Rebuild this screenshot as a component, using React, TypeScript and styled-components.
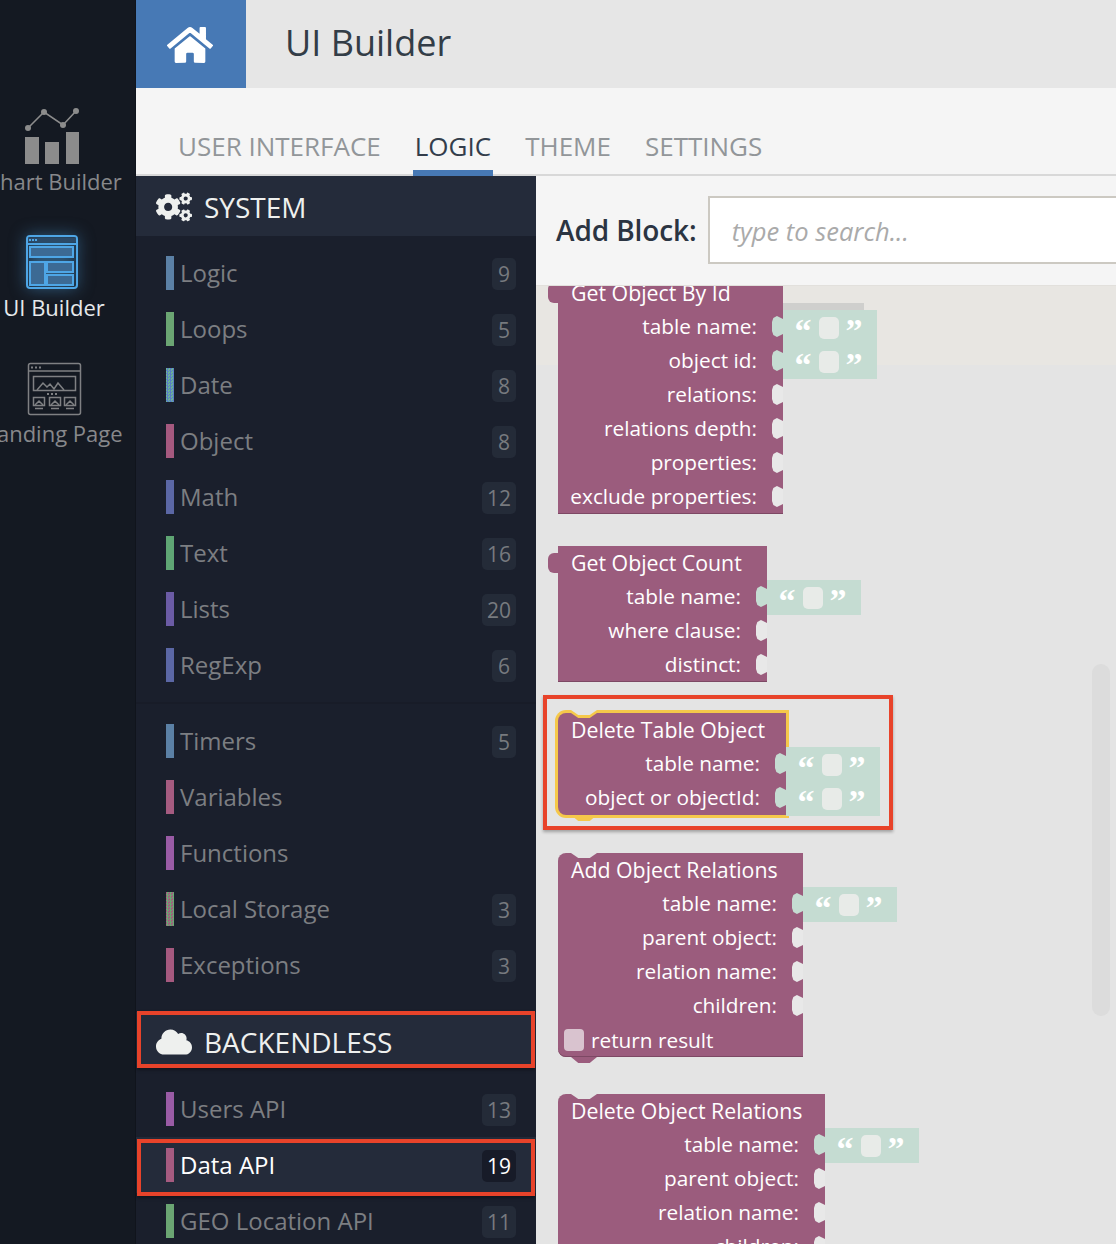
import { createGlobalStyle, styled } from "styled-components";
import { FaCloud, FaCogs, FaHome } from "react-icons/fa";

const GlobalStyle = createGlobalStyle`
  html, body {
    margin: 0;
    padding: 0;
    height: 100%;
    overflow: hidden;
    background: #141922;
    font-family: "Open Sans", "Liberation Sans", sans-serif;
  }
`;

const Page = styled.div`
  display: flex;
  width: 1116px;
  height: 1244px;
  overflow: hidden;
`;

const Rail = styled.nav`
  flex: 0 0 136px;
  box-sizing: border-box;
  width: 136px;
  padding: 108px 27px 0 0;
  background: #141922;
  display: flex;
  flex-direction: column;
  align-items: center;
  border-right: 1px solid #10141c;
`;

const RailItem = styled.div<{ $active?: boolean }>`
  display: flex;
  flex-direction: column;
  align-items: center;
  height: 126px;
  color: ${(p) => (p.$active ? "#e6e9ec" : "#87888b")};
  font-size: 22px;
  line-height: 30px;
  white-space: nowrap;
`;

const RailIcon = styled.svg`
  display: block;
  width: 60px;
  height: 58px;
`;

const GlowIcon = styled(RailIcon)`
  filter: drop-shadow(0 0 8px rgba(78, 166, 230, 0.5));
`;

const Main = styled.div`
  flex: 1;
  min-width: 0;
  display: flex;
  flex-direction: column;
`;

const TopBar = styled.header`
  flex: 0 0 88px;
  display: flex;
  align-items: center;
  background: #e6e6e6;
`;

const HomeTile = styled.div`
  width: 110px;
  height: 88px;
  background: #4779b5;
  color: #fff;
  display: flex;
  align-items: center;
  justify-content: center;
  font-size: 46px;
  padding: 1px 2px 0 0;
  box-sizing: border-box;
`;

const Title = styled.h1`
  margin: 0 0 4px 39px;
  font-size: 36px;
  font-weight: 400;
  color: #333d47;
`;

const Tabs = styled.div`
  flex: 0 0 88px;
  box-sizing: border-box;
  display: flex;
  align-items: flex-end;
  gap: 30px;
  padding-left: 40px;
  background: #f5f5f5;
  border-bottom: 2px solid #d8d8d8;
`;

const Tab = styled.div<{ $active?: boolean }>`
  position: relative;
  top: 2px;
  height: 48px;
  padding: 0 2px;
  box-sizing: border-box;
  font-size: 26px;
  line-height: 36px;
  color: ${(p) => (p.$active ? "#333d4b" : "#929699")};
  border-bottom: 6px solid ${(p) => (p.$active ? "#4779b5" : "transparent")};
`;

const Body = styled.div`
  flex: 1;
  min-height: 0;
  display: flex;
`;

const Sidebar = styled.aside`
  flex: 0 0 400px;
  background: #1a1f2c;
  display: flex;
  flex-direction: column;
`;

const SectionHead = styled.div<{ $framed?: boolean }>`
  position: relative;
  flex: 0 0 ${(p) => (p.$framed ? 56 : 60)}px;
  display: flex;
  align-items: center;
  gap: 12px;
  padding: ${(p) => (p.$framed ? "4px" : "2px")} 0 0 20px;
  box-sizing: border-box;
  background: #242b3a;
  color: #eef0ee;
  font-size: 28px;
  ${(p) => (p.$framed ? "margin-top: 19px;" : "")}
`;

const SectionIcon = styled.span`
  display: flex;
  font-size: 36px;
`;

const Rows = styled.div<{ $top: number; $divider?: boolean }>`
  padding: ${(p) => p.$top}px 0 ${(p) => (p.$divider ? 9 : 0)}px;
  border-bottom: ${(p) => (p.$divider ? "2px solid #181c28" : "none")};
`;

const Row = styled.div<{ $selected?: boolean }>`
  position: relative;
  height: 56px;
  display: flex;
  align-items: center;
  padding: 0 20px 0 30px;
  background: ${(p) => (p.$selected ? "#242b3a" : "transparent")};
  color: ${(p) => (p.$selected ? "#fff" : "#7c7e82")};
  font-size: 24px;
`;

const Swatch = styled.span<{ $color: string }>`
  flex: 0 0 8px;
  height: 34px;
  margin-right: 6px;
  background: ${(p) => p.$color};
`;

const RowLabel = styled.span`
  flex: 1;
  margin-top: -2px;
`;

const Count = styled.span<{ $selected?: boolean }>`
  min-width: 14px;
  height: 32px;
  margin-top: 2px;
  padding: 0 5px;
  border-radius: 5px;
  background: ${(p) => (p.$selected ? "#171b28" : "#242b38")};
  color: ${(p) => (p.$selected ? "#fff" : "#777a7f")};
  font-size: 21px;
  line-height: 33px;
  text-align: center;
`;

const RedFrame = styled.div<{ $row?: boolean }>`
  position: absolute;
  inset: ${(p) => (p.$row ? "2px 1px -3px" : "-1px 1px 0")};
  border: 4px solid #e8432a;
  box-shadow: 0 2px 3px rgba(0, 0, 0, 0.35);
  pointer-events: none;
`;

const Editor = styled.section`
  flex: 1;
  min-width: 0;
  display: flex;
  flex-direction: column;
  overflow: hidden;
`;

const SearchBar = styled.div`
  flex: 0 0 110px;
  box-sizing: border-box;
  display: flex;
  align-items: flex-start;
  padding: 20px 0 0 20px;
  gap: 11px;
  background: #f5f5f5;
  border-bottom: 1px solid #e2e0dc;
`;

const SearchLabel = styled.label`
  flex: none;
  font-size: 28px;
  font-weight: 600;
  line-height: 68px;
  letter-spacing: -0.1px;
  white-space: nowrap;
  color: #2b3442;
`;

const SearchInput = styled.div`
  flex: none;
  width: 480px;
  height: 68px;
  box-sizing: border-box;
  padding-left: 22px;
  border: 2px solid #ccc9c2;
  background: #fff;
  color: #aaa;
  font-size: 25.5px;
  font-style: italic;
  line-height: 66px;
  white-space: nowrap;
`;

const Workspace = styled.div`
  position: relative;
  flex: 1;
  min-height: 0;
  overflow: hidden;
  padding-left: 22px;
  background: #e4e4e4;
`;

const FlyoutBand = styled.div`
  position: absolute;
  left: 0;
  right: 0;
  top: 0;
  height: 79px;
  background: #e8e6e2;
`;

const FlyoutEdge = styled.div`
  position: absolute;
  left: 247px;
  top: 17px;
  width: 81px;
  height: 8px;
  background: #cfcfcd;
`;

const ScrollThumb = styled.div`
  position: absolute;
  left: 556px;
  top: 378px;
  width: 18px;
  height: 352px;
  border-radius: 9px;
  background: #dcdcdc;
`;

const Block = styled.div<{ $width: number; $gap: number; $statement?: boolean; $selected?: boolean }>`
  position: relative;
  box-sizing: border-box;
  width: ${(p) => p.$width}px;
  margin-top: ${(p) => p.$gap}px;
  background: #9b5c7d;
  color: #fff;
  font-size: 20.8px;
  border-radius: ${(p) => (p.$statement ? "8px 0 0 8px" : "0")};
  box-shadow: ${(p) =>
    p.$selected ? "0 0 0 3px #f5c84a" : "inset 0 -1px 0 #7d4864"};
`;

const OutputTab = styled.span`
  position: absolute;
  left: -10px;
  top: 7px;
  width: 11px;
  height: 20px;
  border-radius: 6px 0 0 6px;
  background: #9b5c7d;
`;

const TopNotch = styled.span<{ $offset?: number; $color?: string }>`
  position: absolute;
  left: 13px;
  top: ${(p) => p.$offset ?? 0}px;
  width: 26px;
  height: 5px;
  background: ${(p) => p.$color ?? "#e4e4e4"};
  clip-path: polygon(0 0, 100% 0, 72% 100%, 28% 100%);
`;

const BottomBump = styled.span<{ $selected?: boolean }>`
  position: absolute;
  left: 13px;
  bottom: -6px;
  width: 26px;
  height: 6px;
  background: ${(p) => (p.$selected ? "#f5c84a" : "#9b5c7d")};
  clip-path: polygon(0 0, 100% 0, 72% 100%, 28% 100%);
`;

const BlockTitle = styled.div`
  height: 34px;
  padding-left: 13px;
  font-size: 21.3px;
  line-height: 33px;
  white-space: nowrap;
`;

const Field = styled.div`
  position: relative;
  height: 34px;
  padding-right: 26px;
  text-align: right;
  line-height: 33px;
  white-space: nowrap;
`;

const CheckRow = styled.div`
  height: 34px;
  display: flex;
  align-items: center;
  gap: 7px;
  padding-left: 6px;
`;

const Checkbox = styled.span`
  width: 20px;
  height: 22px;
  border-radius: 4px;
  background: #d9c3cf;
`;

const Socket = styled.span<{ $filled?: boolean }>`
  position: absolute;
  right: 0;
  top: 6px;
  width: 11px;
  height: 21px;
  background: ${(p) => (p.$filled ? "#c5dcd2" : "#e8e8e8")};
  clip-path: polygon(100% 14%, 45% 0, 12% 10%, 0 28%, 0 72%, 12% 90%, 45% 100%, 100% 86%);
`;

const StringBlock = styled.span`
  position: absolute;
  left: 100%;
  top: 0;
  width: 94px;
  height: 35px;
  box-sizing: border-box;
  padding-right: 3px;
  display: flex;
  align-items: center;
  justify-content: center;
  gap: 7px;
  background: #c5dcd2;
  color: #fff;
`;

const Quote = styled.span`
  font-family: "Liberation Serif", serif;
  font-weight: 700;
  font-size: 34px;
  line-height: 34px;
  height: 24px;
  width: 17px;
  margin-top: -4px;
`;

const StringValue = styled.span`
  width: 20px;
  height: 22px;
  border-radius: 5px;
  background: #e8ebe8;
`;

const Highlight = styled.div`
  position: absolute;
  left: -15px;
  right: -107px;
  top: -18px;
  bottom: -15px;
  border: 4px solid #e8432a;
  box-shadow: 0 2px 3px rgba(0, 0, 0, 0.3);
  pointer-events: none;
`;

type Item = { label: string; color: string; count?: number; selected?: boolean };

const systemA: Item[] = [
  { label: "Logic", color: "#5b80a5", count: 9 },
  { label: "Loops", color: "#6ba573", count: 5 },
  { label: "Date", color: "repeating-conic-gradient(#5b80c5 0 25%, #6bb593 0 50%) 0 0 / 3px 3px", count: 8 },
  { label: "Object", color: "#a5597f", count: 8 },
  { label: "Math", color: "#5b67a5", count: 12 },
  { label: "Text", color: "#5fa574", count: 16 },
  { label: "Lists", color: "#6b5ba5", count: 20 },
  { label: "RegExp", color: "#5b67a5", count: 6 },
];

const systemB: Item[] = [
  { label: "Timers", color: "#5b80a5", count: 5 },
  { label: "Variables", color: "#a55b80" },
  { label: "Functions", color: "#995ba5" },
  { label: "Local Storage", color: "repeating-conic-gradient(#6ba573 0 25%, #a5597f 0 50%) 0 0 / 3px 3px", count: 3 },
  { label: "Exceptions", color: "#a5597f", count: 3 },
];

const backendless: Item[] = [
  { label: "Users API", color: "#995ba5", count: 13 },
  { label: "Data API", color: "#a55b80", count: 19, selected: true },
  { label: "GEO Location API", color: "#6ba573", count: 11 },
];

const MenuRows = ({ items }: { items: Item[] }) => (
  <>
    {items.map((item) => (
      <Row key={item.label} $selected={item.selected}>
        <Swatch $color={item.color} />
        <RowLabel>{item.label}</RowLabel>
        {item.count !== undefined && <Count $selected={item.selected}>{item.count}</Count>}
        {item.selected && <RedFrame $row />}
      </Row>
    ))}
  </>
);

const BlockField = ({ label, text }: { label: string; text?: boolean }) => (
  <Field>
    {label}
    <Socket $filled={text} />
    {text && (
      <StringBlock>
        <Quote>“</Quote>
        <StringValue />
        <Quote>”</Quote>
      </StringBlock>
    )}
  </Field>
);

const ChartIcon = () => (
  <RailIcon viewBox="0 0 60 58">
    <g fill="#8c8c8c">
      <rect x="1" y="29" width="14" height="27" />
      <rect x="21" y="34" width="14" height="22" />
      <rect x="42" y="24" width="13" height="32" />
      <circle cx="4" cy="20" r="3" />
      <circle cx="20" cy="4" r="3" />
      <circle cx="39" cy="17" r="3" />
      <circle cx="52" cy="3" r="3" />
    </g>
    <path d="M4 20 20 4 39 17 52 3" fill="none" stroke="#8c8c8c" strokeWidth="1.6" />
  </RailIcon>
);

const BuilderIcon = () => (
  <GlowIcon viewBox="0 0 60 58">
    <g fill="#3c6a94">
      <rect x="6" y="13" width="43" height="10" />
      <rect x="6" y="28" width="15" height="23" />
      <rect x="23" y="28" width="26" height="10" />
      <rect x="23" y="41" width="26" height="10" />
    </g>
    <g fill="none" stroke="#4ea6e6" strokeWidth="2">
      <rect x="3" y="2" width="50" height="52" rx="3" />
      <path d="M3 10h50" />
      <rect x="6" y="13" width="43" height="10" />
      <rect x="6" y="28" width="15" height="23" />
      <rect x="23" y="28" width="26" height="10" />
      <rect x="23" y="41" width="26" height="10" />
    </g>
    <path d="M4 6h48" stroke="#2b4a68" strokeWidth="5" />
    <path d="M5 6h2M8 6h2M11 6h2" stroke="#4ea6e6" strokeWidth="2" />
  </GlowIcon>
);

const LandingIcon = () => (
  <RailIcon viewBox="0 0 60 58">
    <g fill="none" stroke="#7f8083" strokeWidth="1.5">
      <rect x="4.5" y="3.5" width="52" height="51" rx="2" />
      <path d="M4.5 11h52" />
      <rect x="9.5" y="16.5" width="42" height="14" />
      <path d="M13 30l6-7 4 4 3-3 4 5 4-6 6 7" />
      <rect x="9.5" y="37.5" width="11" height="8" />
      <rect x="25.5" y="37.5" width="11" height="8" />
      <rect x="40.5" y="37.5" width="11" height="8" />
      <path d="M11 48.5h8M27 48.5h8M42 48.5h8M11 45l4-4 4 4M27 45l4-4 4 4M42 45l4-4 4 4" />
    </g>
    <path d="M7 7.5h2M11 7.5h2M15 7.5h2M23 34h2M27 34h2M31 34h2" stroke="#7f8083" strokeWidth="2" />
  </RailIcon>
);

export default function App() {
  return (
    <Page>
      <GlobalStyle />
      <Rail>
        <RailItem>
          <ChartIcon />
          Chart Builder
        </RailItem>
        <RailItem $active>
          <BuilderIcon />
          UI Builder
        </RailItem>
        <RailItem>
          <LandingIcon />
          Landing Page
        </RailItem>
      </Rail>
      <Main>
        <TopBar>
          <HomeTile>
            <FaHome />
          </HomeTile>
          <Title>UI Builder</Title>
        </TopBar>
        <Tabs>
          <Tab>USER INTERFACE</Tab>
          <Tab $active>LOGIC</Tab>
          <Tab>THEME</Tab>
          <Tab>SETTINGS</Tab>
        </Tabs>
        <Body>
          <Sidebar>
            <SectionHead>
              <SectionIcon>
                <FaCogs />
              </SectionIcon>
              SYSTEM
            </SectionHead>
            <Rows $top={9} $divider>
              <MenuRows items={systemA} />
            </Rows>
            <Rows $top={9}>
              <MenuRows items={systemB} />
            </Rows>
            <SectionHead $framed>
              <SectionIcon>
                <FaCloud />
              </SectionIcon>
              BACKENDLESS
              <RedFrame />
            </SectionHead>
            <Rows $top={13}>
              <MenuRows items={backendless} />
            </Rows>
          </Sidebar>
          <Editor>
            <SearchBar>
              <SearchLabel>Add Block:</SearchLabel>
              <SearchInput>type to search...</SearchInput>
            </SearchBar>
            <Workspace>
              <FlyoutBand />
              <FlyoutEdge />
              <ScrollThumb />
              <Block $width={225} $gap={-10}>
                <OutputTab />
                <BlockTitle>Get Object By Id</BlockTitle>
                <BlockField label="table name:" text />
                <BlockField label="object id:" text />
                <BlockField label="relations:" />
                <BlockField label="relations depth:" />
                <BlockField label="properties:" />
                <BlockField label="exclude properties:" />
              </Block>
              <Block $width={209} $gap={32}>
                <OutputTab />
                <BlockTitle>Get Object Count</BlockTitle>
                <BlockField label="table name:" text />
                <BlockField label="where clause:" />
                <BlockField label="distinct:" />
              </Block>
              <Block $width={228} $gap={31} $statement $selected>
                <TopNotch $color="#f5c84a" />
                <TopNotch $offset={-3} />
                <BlockTitle>Delete Table Object</BlockTitle>
                <BlockField label="table name:" text />
                <BlockField label="object or objectId:" text />
                <BottomBump $selected />
                <Highlight />
              </Block>
              <Block $width={245} $gap={38} $statement>
                <TopNotch />
                <BlockTitle>Add Object Relations</BlockTitle>
                <BlockField label="table name:" text />
                <BlockField label="parent object:" />
                <BlockField label="relation name:" />
                <BlockField label="children:" />
                <CheckRow>
                  <Checkbox />
                  return result
                </CheckRow>
                <BottomBump />
              </Block>
              <Block $width={267} $gap={37} $statement>
                <TopNotch />
                <BlockTitle>Delete Object Relations</BlockTitle>
                <BlockField label="table name:" text />
                <BlockField label="parent object:" />
                <BlockField label="relation name:" />
                <BlockField label="children:" />
              </Block>
            </Workspace>
          </Editor>
        </Body>
      </Main>
    </Page>
  );
}
